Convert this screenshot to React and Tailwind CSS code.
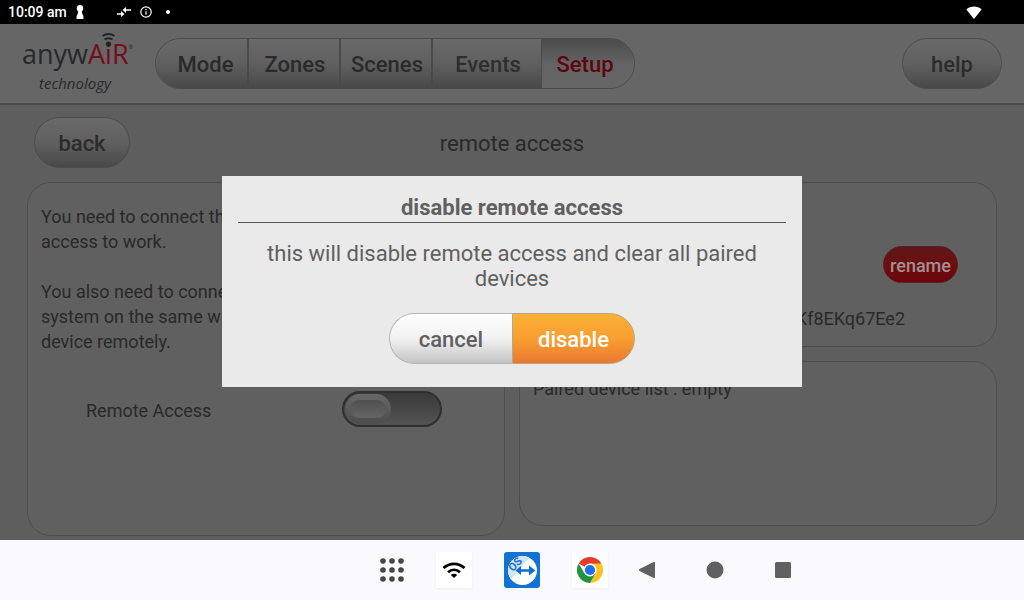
import React, { useState } from 'react'

const GREY_BUTTON =
  'h-[51px] rounded-full border border-[#4c4c4c] bg-linear-to-b from-[#696969] via-[#606060] to-[#494949] pt-0.5 text-[22px] font-medium text-[#2c2c2c]'

const TABS = [
  { name: 'Mode', className: 'w-[93px] pl-2 border-r-2 border-[#4a4a4a] text-[#2a2a2a]' },
  { name: 'Zones', className: 'w-[92px] pl-0.5 border-r-2 border-[#4a4a4a] text-[#2a2a2a]' },
  { name: 'Scenes', className: 'w-[92px] pl-0.5 border-r-2 border-[#4a4a4a] text-[#2a2a2a]' },
  { name: 'Events', className: 'w-[109px] pl-0.5 border-r border-[#4a4a4a] text-[#2e2e2e]' },
]

function StatusBar() {
  return (
    <div className="flex h-6 items-center bg-black pl-2 pr-[42px] text-white">
      <span className="text-sm font-medium">10:09 am</span>
      <svg className="ml-[9px] h-[14px] w-2" viewBox="0 0 8 14" fill="currentColor">
        <circle cx="4" cy="3.2" r="3.2" />
        <path d="M2 5h4v3l1.4 3v3H.6v-3L2 8z" />
      </svg>
      <svg className="ml-8 h-3 w-4" viewBox="0 0 16 12" fill="none" stroke="currentColor" strokeWidth="1.4">
        <path d="M1 8h6M8 4h7" />
        <path d="M5 5 8.500 8 5 11zM10 1 6.500 4l3.500 3z" fill="currentColor" stroke="none" />
      </svg>
      <svg className="ml-2 h-3 w-3" viewBox="0 0 12 12" fill="none" stroke="currentColor" strokeWidth="1.2">
        <circle cx="6" cy="6" r="5.2" />
        <path d="M6 5.2v3.6M6 3v1.2" />
      </svg>
      <span className="ml-[14px] h-1 w-1 rounded-full bg-white" />
      <svg className="ml-auto h-[13px] w-4" viewBox="0 0 16 13" fill="currentColor">
        <path d="M8 13 .4 3.4C4.500-.4 11.500-.4 15.600 3.400z" />
      </svg>
    </div>
  )
}

function Logo() {
  return (
    <svg className="h-[66px] w-[114px] shrink-0" viewBox="0 0 114 66" role="img" aria-label="anywAiR technology">
      <g fontFamily="Open Sans, sans-serif">
        <text x="0" y="33" fontSize="27" fill="#26282c">
          anyw<tspan fill="#750c1c">AiR</tspan>
          <tspan dy="-15" fontSize="6">®</tspan>
        </text>
        <text x="17" y="58" fontSize="15" fontStyle="italic" fill="#26282c">technology</text>
      </g>
      <circle cx="86.500" cy="13" r="2.600" fill="#222" />
      <path d="M82.500 8.500c2.400-1.600 5.600-1.600 8 0M80.500 5c3.600-2.400 8.400-2.400 12 0" fill="none" stroke="#222" strokeWidth="2" />
    </svg>
  )
}

function Header() {
  return (
    <header className="flex h-[81px] items-center border-b-2 border-[#4b4b4b] bg-[#666] px-[22px]">
      <Logo />
      <nav className="ml-[19px] flex h-[51px] shrink-0 overflow-hidden rounded-full border border-[#4a4a4a] text-[22px] font-medium">
        {TABS.map((tab) => (
          <button
            key={tab.name}
            className={`bg-linear-to-b from-[#696969] via-[#606060] to-[#494949] pt-0.5 ${tab.className}`}
          >
            {tab.name}
          </button>
        ))}
        <button className="w-[92px] bg-linear-to-b from-[#4b4b4b] via-[#636363] to-[#666] pr-1.5 pt-0.5 text-[#5e0610]">
          Setup
        </button>
      </nav>
      <button className={`ml-auto w-[100px] ${GREY_BUTTON}`}>help</button>
    </header>
  )
}

function Toggle({ id, checked, onChange }) {
  return (
    <span className="relative h-9 w-[100px]">
      <input
        id={id}
        type="checkbox"
        checked={checked}
        onChange={onChange}
        className="h-full w-full appearance-none rounded-full border-2 border-[#303030] bg-linear-to-b from-[#3a3a3a] to-[#535353]"
      />
      <span className="pointer-events-none absolute left-[3px] top-[3px] flex h-[30px] w-[46px] items-center justify-center rounded-full bg-linear-to-b from-[#686868] to-[#4d4d4d]">
        <span className="h-[18px] w-9 rounded-full bg-linear-to-b from-[#505050] to-[#646464]" />
      </span>
    </span>
  )
}

function Dialog() {
  return (
    <div className="absolute inset-0 flex items-center justify-center pb-0.5">
      <div role="dialog" aria-labelledby="dialog-title" className="w-[580px] bg-[#eaeaea] px-4 pb-[23px] pt-[18px] text-center text-[22px] text-[#606060]">
        <h2 id="dialog-title" className="border-b border-[#555] font-bold leading-7">
          disable remote access
        </h2>
        <p className="mt-[18px] px-6 leading-[25px]">
          this will disable remote access and clear all paired devices
        </p>
        <div className="mt-[22px] flex justify-center font-medium">
          <button className="h-[51px] w-[123px] rounded-l-full border border-r-0 border-[#b5b5b5] bg-linear-to-b from-white via-[#f2f2f2] to-[#c4c4c4] pt-0.5">
            cancel
          </button>
          <button className="h-[51px] w-[123px] rounded-r-full border border-[#b9a58c] bg-linear-to-b from-[#fbb034] via-[#f99f30] to-[#ea7830] pt-0.5 text-white">
            disable
          </button>
        </div>
      </div>
    </div>
  )
}

function RemoteAccess() {
  const [enabled, setEnabled] = useState(false)

  return (
    <main className="flex-1 px-[27px] pb-1 pt-3 text-lg leading-[25px] text-[#292929]">
      <div className="grid grid-cols-[1fr_auto_1fr] items-center px-[7px]">
        <button className={`w-24 ${GREY_BUTTON}`}>back</button>
        <h1 className="pt-0.5 text-[22px]">remote access</h1>
      </div>
      <div className="mt-[14px] grid grid-cols-2 gap-[14px]">
        <section className="min-h-[354px] rounded-3xl border border-[#4e4e4e] bg-[#606060] px-[13px] pt-[21px]">
          <p>
            You need to connect th
            <br />
            access to work.
          </p>
          <p className="mt-[25px]">
            You also need to conne
            <br />
            system on the same w
            <br />
            device remotely.
          </p>
          <div className="mt-[37px] flex items-center justify-between pl-[45px] pr-[49px]">
            <label htmlFor="remote-access" className="pt-0.5">Remote Access</label>
            <Toggle id="remote-access" checked={enabled} onChange={() => setEnabled(!enabled)} />
          </div>
        </section>
        <div className="flex flex-col gap-[14px]">
          <section className="flex min-h-[165px] flex-col items-end rounded-3xl border border-[#4e4e4e] bg-[#606060] pt-[63px]">
            <button className="mr-[38px] h-[37px] w-[75px] rounded-full border border-[#5c2022] bg-linear-to-b from-[#5c1719] via-[#6e0c10] to-[#6c0509] pt-0.5 font-medium text-[#a09090]">
              rename
            </button>
            <p className="mr-[91px] mt-[23px]">Kf8EKq67Ee2</p>
          </section>
          <section className="min-h-[165px] rounded-3xl border border-[#4e4e4e] bg-[#606060] px-[13px] pt-[14px]">
            Paired device list : empty
          </section>
        </div>
      </div>
    </main>
  )
}

function NavBar() {
  return (
    <footer className="flex h-[60px] items-center bg-[#faf9fd] pl-[37%] text-[#606060]">
      <button aria-label="apps">
        <svg className="h-6 w-[26px]" viewBox="-1 0 26 24" fill="#46464a">
          {[3, 12, 21].map((y) => [3, 12, 21].map((x) => <circle key={`${x}-${y}`} cx={x} cy={y} r="2.800" />))}
        </svg>
      </button>
      <div className="ml-[31px] flex gap-8">
        <button aria-label="wifi" className="flex h-9 w-9 items-center justify-center bg-white shadow-xs">
          <svg className="h-4 w-6" viewBox="0 0 24 16" fill="none" stroke="#000" strokeWidth="2.800">
            <path d="M1.500 6c6-5.600 15-5.600 21 0M6 10.300c3.600-3.200 8.400-3.200 12 0" />
            <path d="M12 16 8.800 13c2-1.600 4.400-1.600 6.400 0z" fill="#000" stroke="none" />
          </svg>
        </button>
        <button aria-label="remote support">
          <svg className="h-9 w-9" viewBox="0 0 36 36">
            <rect width="36" height="36" rx="3" fill="#1173d4" />
            <circle cx="18.500" cy="18.500" r="14.500" fill="#fff" />
            <path d="M7 27.300A14.500 14.500 0 0 1 25.500 5.800z" fill="#d5e2ef" />
            <path d="M11.500 18.500 17 14v3.200h8V13.500l6.500 5-6.500 5v-3.700h-8V23z" fill="#0d6fd1" />
            <text x="11" y="16" textAnchor="middle" fontSize="11" fontWeight="700" fontFamily="Roboto, sans-serif" fill="#1774cf" transform="rotate(-45 11 12)">
              OS
            </text>
          </svg>
        </button>
        <button aria-label="chrome" className="flex h-9 w-9 items-center justify-center bg-white shadow-xs">
          <svg className="h-[26px] w-[26px]" viewBox="0 0 26 26">
            <path d="M13 13 1.740 6.500A13 13 0 0 1 24.260 6.500z" fill="#e33b2e" />
            <path d="M13 6.500h11.260A13 13 0 0 1 13 26l5.630-9.750z" fill="#fcc31e" />
            <path d="M7.370 16.250 1.740 6.500A13 13 0 0 0 13 26l5.630-9.750z" fill="#229342" />
            <circle cx="13" cy="13" r="6.500" fill="#fff" />
            <circle cx="13" cy="13" r="5.100" fill="#1a73e8" />
          </svg>
        </button>
      </div>
      <div className="ml-[30px] flex gap-[50px]">
        <button aria-label="back">
          <svg className="h-[18px] w-[18px]" viewBox="0 0 18 18" fill="currentColor" stroke="currentColor" strokeWidth="2" strokeLinejoin="round">
            <path d="M2 9 16 2v14z" />
          </svg>
        </button>
        <button aria-label="home">
          <svg className="h-[18px] w-[18px]" viewBox="0 0 18 18" fill="currentColor">
            <circle cx="9" cy="9" r="8.500" />
          </svg>
        </button>
        <button aria-label="recent apps">
          <svg className="h-[18px] w-[18px]" viewBox="0 0 18 18" fill="currentColor">
            <rect x="1" y="1" width="16" height="16" rx="1.500" />
          </svg>
        </button>
      </div>
    </footer>
  )
}

export default function App() {
  return (
    <div className="flex min-h-screen flex-col font-[Roboto,sans-serif]">
      <StatusBar />
      <div className="relative flex flex-1 flex-col bg-[#5e5e5e]">
        <Header />
        <RemoteAccess />
        <Dialog />
      </div>
      <NavBar />
    </div>
  )
}
